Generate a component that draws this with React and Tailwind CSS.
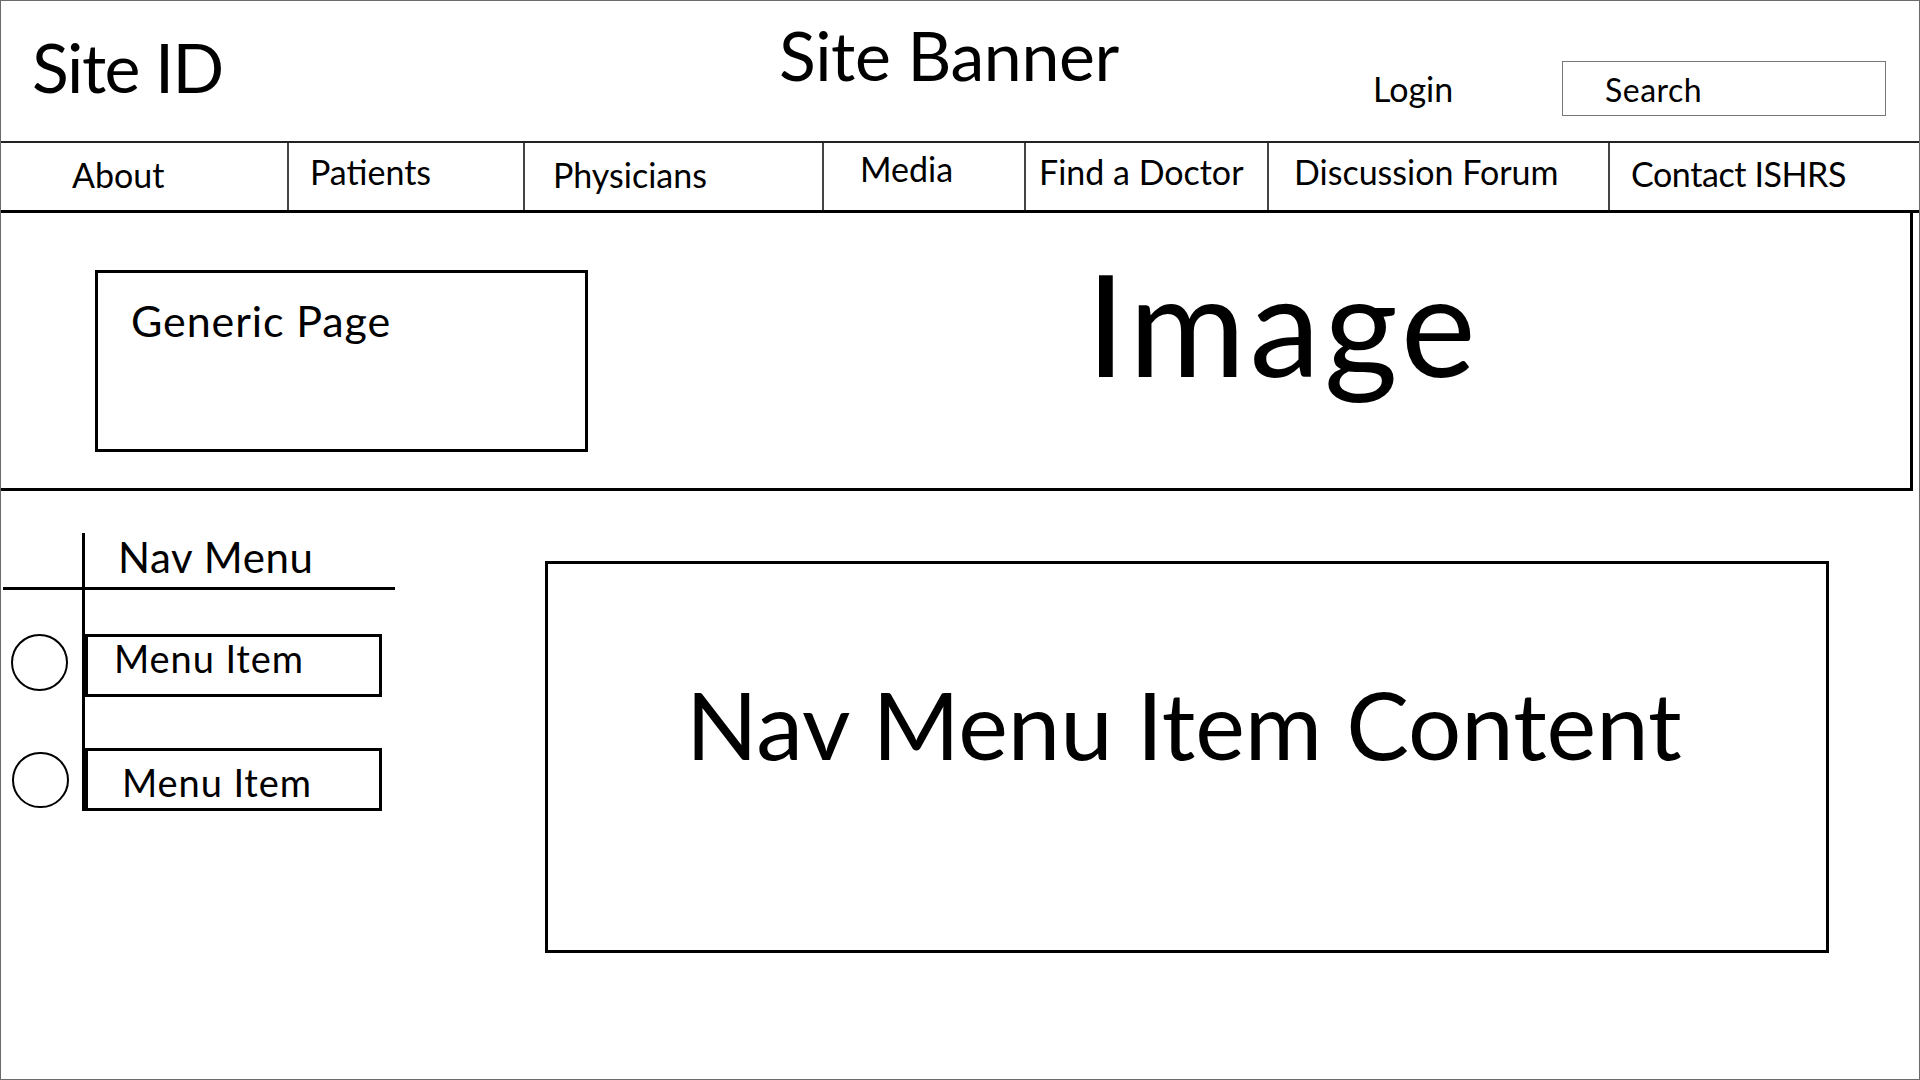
// Wireframe: site layout with banner, top nav, hero image and side nav menu

const NAV_ITEMS = [
  { label: 'About', cell: 'w-[286px] pl-[71px] pt-[15px]' },
  { label: 'Patients', cell: 'w-[236px] border-l-2 border-[#444] pl-[21px] pt-[12px]' },
  { label: 'Physicians', cell: 'w-[299px] border-l-2 border-[#444] pl-[28px] pt-[15px]' },
  { label: 'Media', cell: 'w-[202px] border-l-2 border-[#444] pl-[36px] pt-[9px]' },
  { label: 'Find a Doctor', cell: 'w-[243px] border-l-2 border-[#444] pl-[13px] pt-[12px]' },
  { label: 'Discussion Forum', cell: 'w-[341px] border-l-2 border-[#444] pl-[25px] pt-[12px]' },
  { label: 'Contact ISHRS', cell: 'flex-1 border-l-2 border-[#444] pl-[21px] pt-[14px] tracking-[-0.4px]' },
];

function Header() {
  return (
    <header className="flex h-[140px] items-start">
      <div className="w-[778px] pl-[31px] pt-[32px] text-[68px] leading-none tracking-[-1.5px]">Site ID</div>
      <div className="w-[594px] pt-[20px] text-[68px] leading-none tracking-[-0.4px]">Site Banner</div>
      <div className="w-[189px] pt-[71px] text-[34px] leading-none">Login</div>
      <div className="mt-[60px] h-[55px] w-[324px] border-[1.5px] border-[#777] pl-[42px] pt-[12px] text-[32px] leading-none tracking-[0.5px]">
        Search
      </div>
    </header>
  );
}

function TopNav() {
  return (
    <nav className="flex h-[72px] border-t-2 border-b-[3px] border-t-[#222] border-b-black">
      {NAV_ITEMS.map(item => (
        <div key={item.label} className={`${item.cell} text-[34px] leading-none whitespace-nowrap`}>
          {item.label}
        </div>
      ))}
    </nav>
  );
}

function Hero() {
  return (
    <section className="flex h-[278px] w-[1912px] items-start border-r-[3px] border-b-[3px] border-black">
      <div className="ml-[94px] mt-[57px] h-[182px] w-[493px] border-[3px] border-black pl-[33px] pt-[26px] text-[43px] leading-none tracking-[0.9px]">
        Generic Page
      </div>
      <div className="ml-[498px] mt-[38px] text-[142px] leading-none tracking-[4px]">Image</div>
    </section>
  );
}

function SideNav() {
  return (
    <div className="flex w-[395px] flex-col pt-[42px]">
      {/* titulo do menu */}
      <div className="flex h-[54px]">
        <div className="w-[81px]" />
        <div className="flex-1 border-l-[3px] border-black pl-[33px] pt-[3px] text-[42px] leading-none tracking-[0.6px]">
          Nav Menu
        </div>
      </div>
      <div className="ml-[2px] h-[3px] w-[392px] bg-black" />

      {/* itens */}
      <div className="flex flex-1">
        <div className="flex w-[81px] flex-col pl-[10px] pt-[44px]">
          <div className="h-[57px] w-[57px] rounded-full border-2 border-black" />
          <div className="mt-[61px] ml-[1px] h-[56px] w-[57px] rounded-full border-2 border-black" />
        </div>
        <div className="flex flex-1 flex-col items-start border-l-[3px] border-black pt-[44px]">
          <div className="h-[63px] w-[297px] border-[3px] border-black pl-[26px] pt-[2px] text-[38px] leading-none tracking-[0.9px]">
            Menu Item
          </div>
          <div className="mt-[51px] h-[63px] w-[297px] border-[3px] border-black pl-[34px] pt-[12px] text-[38px] leading-none tracking-[0.9px]">
            Menu Item
          </div>
        </div>
      </div>
    </div>
  );
}

export default function App() {
  return (
    <div className="flex h-[1080px] w-[1920px] flex-col overflow-hidden border border-[#6b6b6b] bg-white font-['Lato',sans-serif] text-black">
      <Header />
      <TopNav />
      <Hero />
      <div className="flex flex-1 items-start">
        <SideNav />
        <div className="ml-[149px] mt-[70px] h-[392px] w-[1284px] border-[3px] border-black pl-[138px] pt-[113px] text-[94px] leading-none whitespace-nowrap">
          Nav Menu Item Content
        </div>
      </div>
    </div>
  );
}
